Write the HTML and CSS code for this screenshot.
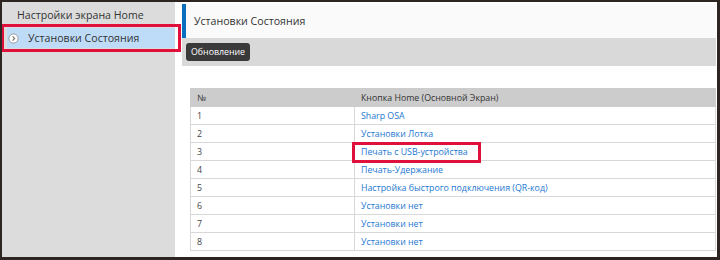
FILE: index.html
```html
<!DOCTYPE html>
<html>

<head>
    <title>Установки Состояния</title>
    <link rel="stylesheet" href="styles.css">
</head>

<body>

    <div class="frame">
        <div class="sidebar">
            <div class="menu-item">Настройки экрана Home</div>
            <div class="menu-item selected">
                <svg class="arrow" width="11" height="11" viewBox="0 0 11 11">
                    <circle cx="5.5" cy="5.5" r="4.6" fill="#fff" stroke="#9a9a9a" stroke-width="1"/>
                    <path d="M4.6 3.4 L6.6 5.5 L4.6 7.6" fill="none" stroke="#777" stroke-width="1.2"/>
                </svg>
                <span>Установки Состояния</span>
                <div class="mark mark-menu"></div>
            </div>
        </div>

        <div class="main">
            <div class="page-title">Установки Состояния</div>
            <div class="toolbar">
                <button class="btn">Обновление</button>
            </div>

            <table class="home-table">
                <tr>
                    <th class="col-no">№</th>
                    <th>Кнопка Home (Основной Экран)</th>
                </tr>
                <tr><td>1</td><td><a href="#">Sharp OSA</a></td></tr>
                <tr><td>2</td><td><a href="#">Установки Лотка</a></td></tr>
                <tr><td>3</td><td class="marked"><a href="#">Печать с USB-устройства</a><div class="mark mark-row"></div></td></tr>
                <tr><td>4</td><td><a href="#">Печать-Удержание</a></td></tr>
                <tr><td>5</td><td><a href="#">Настройка быстрого подключения (QR-код)</a></td></tr>
                <tr><td>6</td><td><a href="#">Установки нет</a></td></tr>
                <tr><td>7</td><td><a href="#">Установки нет</a></td></tr>
                <tr><td>8</td><td><a href="#">Установки нет</a></td></tr>
            </table>
        </div>
    </div>

</body>

</html>
```

FILE: styles.css
```css
body {
    margin: 0;
    font-family: "Open Sans", "Noto Sans", sans-serif;
    color: #333;
    background-color: #fff;
}

.frame {
    width: 720px;
    height: 260px;
    box-sizing: border-box;
    border-style: solid;
    border-color: #2d2522;
    border-width: 2px 3px 3px 2px;
    display: flex;
    overflow: hidden;
    background-color: #fff;
}

/* left menu */
.sidebar {
    width: 173px;
    flex: none;
    background-color: #dcdcdc;
    padding-top: 2px;
    box-sizing: border-box;
}

.menu-item {
    font-size: 10.6px;
    height: 22px;
    line-height: 22px;
    padding-left: 15px;
    color: #333;
}

.menu-item.selected {
    position: relative;
    margin-top: 2px;
    margin-left: 5px;
    height: 20px;
    line-height: 20px;
    padding-left: 1px;
    background-color: #bedcf8;
    display: flex;
    align-items: center;
}

.arrow {
    flex: none;
    margin-right: 9px;
}

/* red annotation boxes */
.mark {
    position: absolute;
    border: 3px solid #e0103c;
    pointer-events: none;
}

.mark-menu {
    top: -4px;
    bottom: -4px;
    left: -6px;
    right: -6px;
}

.mark-row {
    top: -1px;
    left: -3px;
    width: 123px;
    height: 15px;
}

/* main area */
.main {
    flex: 1;
    margin-left: 7px;
    padding-top: 2px;
    padding-right: 1px;
    min-width: 0;
}

.page-title {
    height: 34px;
    line-height: 34px;
    border-left: 4px solid #0a6fbe;
    background-color: #fafafa;
    padding-left: 8px;
    font-size: 10.6px;
    color: #333;
}

.toolbar {
    height: 28px;
    background-color: #d9d9d9;
    display: flex;
    align-items: center;
    padding-left: 4px;
}

.btn {
    font-family: inherit;
    font-size: 8.8px;
    color: #fff;
    background-color: #3a3a3a;
    border: none;
    border-radius: 3px;
    height: 18px;
    padding: 0 5px;
}

/* table */
.home-table {
    margin: 22px 0 0 8px;
    width: calc(100% - 8px);
    border-collapse: collapse;
    font-size: 8.8px;
}

.home-table th,
.home-table td {
    height: 17px;
    padding: 0 6px;
    text-align: left;
    font-weight: normal;
    border: 1px solid #d8d8d8;
    color: #444;
    white-space: nowrap;
}

.home-table th {
    background-color: #cccccc;
    border-color: #cccccc;
    color: #333;
}

.home-table .col-no {
    width: 151px;
}

.home-table a {
    color: #1e78d0;
    text-decoration: none;
}

.marked {
    position: relative;
}
```
